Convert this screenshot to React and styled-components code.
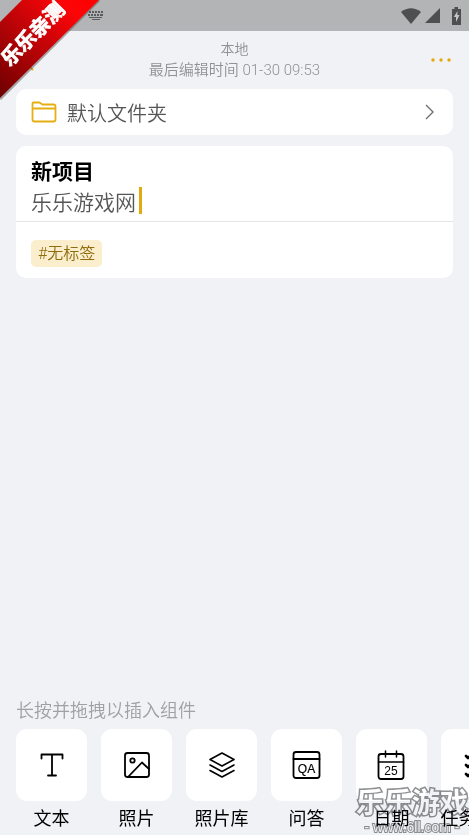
import React from "react";
import styled, { createGlobalStyle } from "styled-components";

const GlobalStyle = createGlobalStyle`
  *, *::before, *::after { box-sizing: border-box; }
  html, body { margin: 0; background: #f1f2f5; }
  body, button, input {
    font-family: Roboto, "Noto Sans CJK SC", sans-serif;
    font-weight: 350;
  }
`;

const Page = styled.div`
  position: relative;
  display: flex;
  flex-direction: column;
  min-height: 100vh;
  overflow: hidden;
  background: #f1f2f5;
`;

const StatusBar = styled.div`
  display: flex;
  align-items: center;
  justify-content: space-between;
  height: 31px;
  padding: 0 8px 0 88px;
  background: #b3b4b6;
  svg { display: block; }
`;

const StatusIcons = styled.div`
  display: flex;
  align-items: center;
  gap: 4px;
`;

const Header = styled.header`
  display: grid;
  grid-template-columns: 40px 1fr 40px;
  align-items: center;
  height: 58px;
  padding: 0 8px;
`;

const IconButton = styled.button`
  display: flex;
  align-items: center;
  justify-content: center;
  height: 40px;
  padding: 0;
  border: 0;
  background: none;
  cursor: pointer;
`;

const HeaderText = styled.div`
  text-align: center;
  font-size: ${(p) => p.$size || 14}px;
  line-height: 21px;
  color: #909193;
`;

const Content = styled.main`
  display: flex;
  flex: 1;
  flex-direction: column;
  gap: 11px;
  padding: 0 16px;
`;

const FolderRow = styled.button`
  display: flex;
  align-items: center;
  gap: 10px;
  height: 46px;
  padding: 0 19px 0 15px;
  border: 0;
  border-radius: 10px;
  background: #fff;
  color: #555;
  font-size: 20px;
  line-height: 30px;
  text-align: left;
  cursor: pointer;
  span { flex: 1; padding-top: 3px; }
`;

const NoteCard = styled.section`
  border-radius: 10px;
  background: #fff;
`;

const Fields = styled.div`
  padding: 8px 15px 5px;
  border-bottom: 1px solid #e4e5e7;
`;

const FieldLine = styled.div`
  display: flex;
  align-items: center;
  height: 31px;
`;

const Field = styled.input`
  field-sizing: content;
  min-width: 0;
  max-width: 100%;
  height: 31px;
  padding: 0;
  border: 0;
  outline: 0;
  background: none;
  color: ${(p) => (p.$title ? "#000" : "#555")};
  font-size: 21px;
  font-weight: ${(p) => (p.$title ? 700 : 350)};
`;

const Caret = styled.span`
  width: 3px;
  height: 27px;
  margin-left: 3px;
  background: #e3aa0c;
`;

const Tags = styled.div`
  display: flex;
  padding: 18px 15px 11px;
`;

const Tag = styled.button`
  height: 27px;
  padding: 1px 7px 0;
  border: 0;
  border-radius: 5px;
  background: #faeecd;
  color: #8f6c0c;
  font-size: 16px;
  line-height: 26px;
  cursor: pointer;
`;

const Palette = styled.section`
  overflow: hidden;
`;

const Hint = styled.p`
  margin: 0;
  padding: 0 16px;
  color: #a0a1a2;
  font-size: 18px;
  line-height: 28px;
`;

const Strip = styled.div`
  display: flex;
  gap: 14px;
  padding: 4px 16px 3px;
`;

const Tool = styled.button`
  display: flex;
  flex: none;
  flex-direction: column;
  align-items: center;
  gap: 5px;
  width: 71px;
  padding: 0;
  border: 0;
  background: none;
  color: #000;
  font-size: 18px;
  font-weight: 400;
  line-height: 26px;
  white-space: nowrap;
  cursor: grab;
`;

const Tile = styled.span`
  display: flex;
  align-items: center;
  justify-content: center;
  width: 100%;
  height: 72px;
  border-radius: 11px;
  background: #fff;
`;

const Ribbon = styled.div`
  position: absolute;
  top: 0;
  left: 0;
  width: 102px;
  height: 102px;
  pointer-events: none;
  svg { display: block; }
`;

const Watermark = styled.div`
  position: absolute;
  right: 0;
  bottom: 0;
  width: 114px;
  pointer-events: none;
  text-align: center;
  white-space: nowrap;
  color: #fff;
  paint-order: stroke fill;
  mix-blend-mode: multiply;
`;

const WatermarkName = styled.div`
  font-size: 28px;
  font-weight: 700;
  line-height: 30px;
  -webkit-text-stroke: 3px #8f9194;
`;

const WatermarkSite = styled.div`
  font-family: "Liberation Sans", sans-serif;
  font-size: 14px;
  font-weight: 400;
  line-height: 16px;
  -webkit-text-stroke: 2px #8f9194;
`;

const Glyph = ({ children, size = 30 }) => (
  <svg
    width={size}
    height={size}
    viewBox="0 0 30 30"
    fill="none"
    stroke="#000"
    strokeWidth="1.8"
    strokeLinecap="round"
    strokeLinejoin="round"
    aria-hidden="true"
  >
    {children}
  </svg>
);

const tools = [
  {
    name: "文本",
    art: <path d="M4.500 8.500V4.500h21v4M15 4.500v21M11 25.500h8" />,
  },
  {
    name: "照片",
    art: (
      <>
        <rect x="3" y="3" width="24" height="24" rx="2.500" />
        <circle cx="10.500" cy="10.500" r="2.200" />
        <path d="M6.500 26.500 20 12.500l7 6.500" />
      </>
    ),
  },
  {
    name: "照片库",
    art: (
      <g strokeWidth="1.600">
        <path d="M15 3 27 9.500 15 16 3 9.500Z" />
        <path d="M3 15l12 6.500L27 15M3 20.500 15 27l12-6.500" />
      </g>
    ),
  },
  {
    name: "问答",
    art: (
      <>
        <rect x="1.500" y="2" width="26" height="26" rx="2.500" />
        <path d="M1.500 9h26" />
        <text
          x="14.500"
          y="22.500"
          textAnchor="middle"
          fontSize="12"
          fontWeight="400"
          fontFamily="Liberation Sans, sans-serif"
          fill="#000"
          strokeWidth="0.200"
        >
          QA
        </text>
      </>
    ),
  },
  {
    name: "日期",
    art: (
      <>
        <rect x="1.500" y="4" width="25" height="25" rx="2.500" />
        <path d="M1.500 12h25M8.500 1v6M19.500 1v6" strokeWidth="1.500" />
        <text
          x="14"
          y="24.500"
          textAnchor="middle"
          fontSize="12"
          fontWeight="400"
          fontFamily="Liberation Sans, sans-serif"
          fill="#000"
          stroke="none"
        >
          25
        </text>
      </>
    ),
  },
  {
    name: "任务列表",
    art: (
      <>
        <path d="m4 6 2 2 4-4M4 15l2 2 4-4M4 24l2 2 4-4" strokeWidth="2.600" />
        <path d="M14 6h13M14 15h13M14 24h13" />
      </>
    ),
  },
];

export default function App() {
  return (
    <>
      <GlobalStyle />
      <Page>
        <StatusBar>
          <svg width="16" height="10" viewBox="0 0 16 10" fill="#5b5c5e" aria-hidden="true">
            <path d="M1 0h2v2H1zM4 0h2v2H4zM7 0h2v2H7zM10 0h2v2h-2zM13 0h2v2h-2zM0 3h2v2H0zM3 3h2v2H3zM6 3h2v2H6zM9 3h2v2H9zM12 3h3v2h-3zM1 6h13v1H1zM4 8h8v1H4z" />
          </svg>
          <StatusIcons>
            <svg width="20" height="16" viewBox="0 0 20 16" fill="#4e4f51" aria-hidden="true">
              <path d="M0 4Q10-3.500 20 4L10 16Z" />
            </svg>
            <svg width="15" height="15" viewBox="0 0 15 15" fill="#4e4f51" aria-hidden="true">
              <path d="M15 0v15H0Z" />
            </svg>
            <svg width="17" height="18" viewBox="0 0 17 18" aria-hidden="true">
              <path d="M10.500 0h3.500v2H17v16H8V2h2.500Z" fill="#4e4f51" />
              <path d="M13.500 4 9.800 10H12v5l3.500-7h-2.200Z" fill="#c5c6c8" />
            </svg>
          </StatusIcons>
        </StatusBar>

        <Header>
          <IconButton aria-label="返回">
            <svg width="14" height="22" viewBox="0 0 14 22" fill="none" stroke="#e3aa0c" strokeWidth="2" aria-hidden="true">
              <path d="M12 1 2 11l10 10" />
            </svg>
          </IconButton>
          <div>
            <HeaderText>本地</HeaderText>
            <HeaderText $size={15}>最后编辑时间 01-30 09:53</HeaderText>
          </div>
          <IconButton aria-label="更多">
            <svg width="20" height="4" viewBox="0 0 20 4" fill="#e3aa0c" aria-hidden="true">
              <circle cx="2" cy="2" r="1.700" />
              <circle cx="10" cy="2" r="1.700" />
              <circle cx="18" cy="2" r="1.700" />
            </svg>
          </IconButton>
        </Header>

        <Content>
          <FolderRow>
            <svg width="26" height="22" viewBox="0 0 26 22" fill="none" stroke="#e6ae10" strokeWidth="1.800" strokeLinejoin="round" aria-hidden="true">
              <path d="M1.500 18.500V2.500Q1.500 1.500 2.500 1.500H8.500L11.500 3.500H22.500Q24.500 3.500 24.500 5.500V18.500Q24.500 20.500 22.500 20.500H3.500Q1.500 20.500 1.500 18.500ZM1.500 7.500H24.500" />
            </svg>
            <span>默认文件夹</span>
            <svg width="10" height="16" viewBox="0 0 10 16" fill="none" stroke="#707070" strokeWidth="1.400" aria-hidden="true">
              <path d="m2 1 7 7-7 7" />
            </svg>
          </FolderRow>

          <NoteCard>
            <Fields>
              <FieldLine>
                <Field $title aria-label="标题" defaultValue="新项目" />
              </FieldLine>
              <FieldLine>
                <Field aria-label="内容" defaultValue="乐乐游戏网" />
                <Caret />
              </FieldLine>
            </Fields>
            <Tags>
              <Tag>#无标签</Tag>
            </Tags>
          </NoteCard>
        </Content>

        <Palette>
          <Hint>长按并拖拽以插入组件</Hint>
          <Strip>
            {tools.map((tool) => (
              <Tool key={tool.name}>
                <Tile>
                  <Glyph>{tool.art}</Glyph>
                </Tile>
                {tool.name}
              </Tool>
            ))}
          </Strip>
        </Palette>

        <Ribbon>
          <svg width="102" height="102" viewBox="0 0 102 102">
            <defs>
              <linearGradient id="band" x1="0" y1="1" x2="1" y2="0">
                <stop offset="0" stopColor="#6d0000" />
                <stop offset="0.500" stopColor="#c40408" />
                <stop offset="0.800" stopColor="#fb0507" />
                <stop offset="1" stopColor="#f00" />
              </linearGradient>
            </defs>
            <path d="M0 99 99 0" stroke="#555" strokeOpacity="0.500" strokeWidth="3" />
            <path d="M22 0H99L0 98V22Z" fill="url(#band)" />
            <text
              transform="translate(33 34) rotate(-45)"
              y="7"
              textAnchor="middle"
              fontSize="20"
              fontWeight="700"
              fontFamily="Noto Sans CJK SC, sans-serif"
              fill="#fff"
              stroke="#fff"
              strokeWidth="0.800"
            >
              乐乐亲测
            </text>
          </svg>
        </Ribbon>

        <Watermark>
          <WatermarkName>乐乐游戏</WatermarkName>
          <WatermarkSite>- www.6ll.com -</WatermarkSite>
        </Watermark>
      </Page>
    </>
  );
}
